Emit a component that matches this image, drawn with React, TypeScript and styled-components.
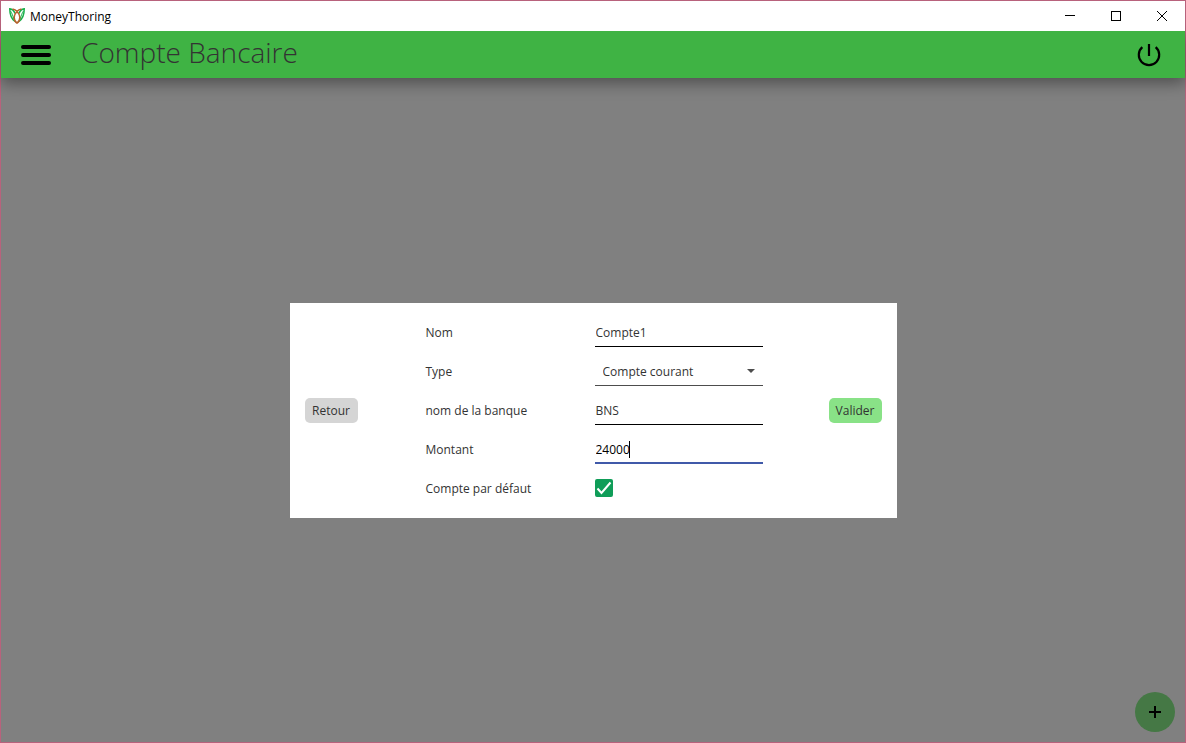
import React, { useState } from "react";
import styled, { createGlobalStyle } from "styled-components";

const GlobalStyle = createGlobalStyle`
  *, *::before, *::after { box-sizing: border-box; }
  body { margin: 0; }
  body, button, input, select {
    font-family: "Open Sans", "Noto Sans", sans-serif;
    font-size: 12px;
    color: #333;
  }
`;

const Window = styled.div`
  position: relative;
  display: flex;
  flex-direction: column;
  min-height: 100vh;
  border: 1px solid #b8627c;
  background: #808080;
`;

const TitleBar = styled.div`
  position: relative;
  z-index: 1;
  display: flex;
  align-items: center;
  height: 30px;
  padding-left: 8px;
  background: #fff;
`;

const AppName = styled.span`
  flex: 1;
  margin-left: 5px;
  color: #000;
`;

const PlainButton = styled.button`
  display: flex;
  align-items: center;
  justify-content: center;
  padding: 0;
  border: 0;
  background: transparent;
  color: #000;
`;

const WindowButton = styled(PlainButton)`
  width: 46px;
  height: 30px;
`;

const Header = styled.header`
  display: flex;
  align-items: center;
  height: 47px;
  padding: 0 24px 0 20px;
  background: #3fb344;
  box-shadow: 0 5px 16px rgba(0, 0, 0, 0.4);
`;

const Title = styled.h1`
  flex: 1;
  margin: 0 0 6px 30px;
  font-size: 28px;
  line-height: 40px;
  font-weight: 350;
`;

const Main = styled.main`
  flex: 1;
  display: flex;
  align-items: center;
  justify-content: center;
`;

const Card = styled.form`
  display: grid;
  grid-template-columns: 121px 1fr auto;
  align-items: center;
  justify-items: start;
  width: 100%;
  max-width: 607px;
  padding: 15px;
  background: #fff;
`;

const ActionButton = styled.button<{ $primary?: boolean }>`
  width: 53px;
  height: 25px;
  padding: 0;
  border: 0;
  border-radius: 5px;
  background: ${(p) => (p.$primary ? "#89e287" : "#d5d5d5")};
`;

const Fields = styled.div`
  display: grid;
  grid-template-columns: 169px 168px;
  grid-auto-rows: 29px;
  row-gap: 10px;
  align-items: center;
`;

const Control = styled.div`
  position: relative;
  display: flex;
  align-items: center;
  height: 29px;
`;

const TextInput = styled.input<{ $active?: boolean }>`
  width: 100%;
  height: 29px;
  padding: 2px 1px 0;
  border: 0;
  border-bottom: ${(p) => (p.$active ? "2px solid #4059a9" : "1px solid #000")};
  outline: 0;
  background: transparent;
  color: ${(p) => (p.$active ? "#000" : "#333")};
`;

const Caret = styled.span`
  position: absolute;
  top: 6px;
  width: 1px;
  height: 17px;
  background: #000;
`;

const Select = styled.select`
  appearance: none;
  width: 100%;
  height: 29px;
  padding: 2px 24px 0 8px;
  border: 0;
  border-bottom: 1px solid #4d4d4d;
  border-radius: 0;
  outline: 0;
  background: transparent;
`;

const Arrow = styled.svg`
  position: absolute;
  right: 8px;
  pointer-events: none;
`;

const Checkbox = styled.input`
  appearance: none;
  width: 18px;
  height: 18px;
  margin: 0;
  border: 2px solid #0f9d58;
  border-radius: 2px;
  &:checked { background: #0f9d58; }
`;

const Tick = styled.svg`
  position: absolute;
  left: 0;
  pointer-events: none;
`;

const AddButton = styled(PlainButton)`
  position: absolute;
  right: 10px;
  bottom: 10px;
  width: 40px;
  height: 40px;
  border-radius: 50%;
  background: #457845;
`;

const Logo = () => (
  <svg width="16" height="16" viewBox="0 0 16 16" fill="none" strokeWidth="1.5" aria-hidden="true">
    <path d="M6 13.500C2.500 11 0.700 6.500 0.800 0.800C3.500 1.200 5 3 6 5.500" stroke="#17b04a" />
    <path d="M10 13.500C13.500 11 15.300 6.500 15.200 0.800C12.500 1.200 11 3 10 5.500" stroke="#17b04a" />
    <path d="M1.500 3C3 5 4 8 5 11.500M14.500 3C13 5 12 8 11 11.500" stroke="#17b04a" strokeWidth="1" />
    <path d="M3.500 1C7 1.500 10.500 5 10.800 9.500C10.800 12 9.800 14 8 15.200C6.200 14 5.200 12 5.200 9.500C5.500 5 9 1.500 12.500 1" stroke="#b5622d" strokeWidth="1.500" />
  </svg>
);

export default function App() {
  const [name, setName] = useState("Compte1");
  const [bank, setBank] = useState("BNS");
  const [amount, setAmount] = useState("24000");
  const [isDefault, setIsDefault] = useState(true);

  return (
    <>
      <GlobalStyle />
      <Window>
        <TitleBar>
          <Logo />
          <AppName>MoneyThoring</AppName>
          <WindowButton type="button" aria-label="Réduire">
            <svg width="10" height="10" stroke="currentColor" shapeRendering="crispEdges"><path d="M0 4.500H10" /></svg>
          </WindowButton>
          <WindowButton type="button" aria-label="Agrandir">
            <svg width="10" height="10" fill="none" stroke="currentColor" shapeRendering="crispEdges"><path d="M0.500 0.500H9.500V9.500H0.500Z" /></svg>
          </WindowButton>
          <WindowButton type="button" aria-label="Fermer">
            <svg width="10" height="10" stroke="currentColor"><path d="M0 0L10 10M10 0L0 10" /></svg>
          </WindowButton>
        </TitleBar>
        <Header>
          <PlainButton type="button" aria-label="Menu">
            <svg width="30" height="20" stroke="currentColor" strokeWidth="4" strokeLinecap="round"><path d="M2 2H28M2 10H28M2 18H28" /></svg>
          </PlainButton>
          <Title>Compte Bancaire</Title>
          <PlainButton type="button" aria-label="Déconnexion">
            <svg width="24" height="24" viewBox="0 0 24 24" fill="none" stroke="currentColor" strokeWidth="2.200"><path d="M12 1V13M5.300 4.200A10.200 10.200 0 1 0 18.700 4.200" /></svg>
          </PlainButton>
        </Header>
        <Main>
          <Card onSubmit={(e) => e.preventDefault()}>
            <ActionButton type="button">Retour</ActionButton>
            <Fields>
              <label htmlFor="name">Nom</label>
              <Control>
                <TextInput id="name" value={name} onChange={(e) => setName(e.target.value)} />
              </Control>
              <label htmlFor="type">Type</label>
              <Control>
                <Select id="type" defaultValue="courant">
                  <option value="courant">Compte courant</option>
                </Select>
                <Arrow width="8" height="4" viewBox="0 0 8 4" fill="#4d4d4d"><path d="M0 0H8L4 4Z" /></Arrow>
              </Control>
              <label htmlFor="bank">nom de la banque</label>
              <Control>
                <TextInput id="bank" value={bank} onChange={(e) => setBank(e.target.value)} />
              </Control>
              <label htmlFor="amount">Montant</label>
              <Control>
                <TextInput id="amount" $active value={amount} onChange={(e) => setAmount(e.target.value)} />
                <Caret style={{ left: `${amount.length}ch` }} />
              </Control>
              <label htmlFor="default">Compte par défaut</label>
              <Control>
                <Checkbox id="default" type="checkbox" checked={isDefault} onChange={(e) => setIsDefault(e.target.checked)} />
                {isDefault && (
                  <Tick width="18" height="18" fill="none" stroke="#fff" strokeWidth="2"><path d="M2.500 9.500L6.500 14L15.500 3.500" /></Tick>
                )}
              </Control>
            </Fields>
            <ActionButton type="submit" $primary>Valider</ActionButton>
          </Card>
        </Main>
        <AddButton type="button" aria-label="Ajouter">
          <svg width="12" height="12" stroke="currentColor" strokeWidth="2"><path d="M6 0V12M0 6H12" /></svg>
        </AddButton>
      </Window>
    </>
  );
}
